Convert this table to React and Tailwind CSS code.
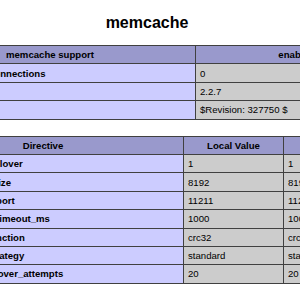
import React from 'react';

const info = [
  ['Active persistent connections', '0'],
  ['Version', '2.2.7'],
  ['Revision', '$Revision: 327750 $'],
];

const directives = [
  ['memcache.allow_failover', '1', '1'],
  ['memcache.chunk_size', '8192', '8192'],
  ['memcache.default_port', '11211', '11211'],
  ['memcache.default_timeout_ms', '1000', '1000'],
  ['memcache.hash_function', 'crc32', 'crc32'],
  ['memcache.hash_strategy', 'standard', 'standard'],
  ['memcache.max_failover_attempts', '20', '20'],
];

const cell = 'border border-[#404040] h-[18.4px] p-0 leading-[11px] align-middle whitespace-nowrap overflow-hidden';

const App = () => {
  return (
    <div className="w-[300px] h-[300px] overflow-hidden bg-white text-black font-['Liberation_Sans',Arial,sans-serif]">
      <h2 className="pt-[12px] pr-[6px] text-center text-[16px] leading-[21px] font-bold">memcache</h2>

      <table className="mt-[12px] ml-[-96px] w-[493px] table-fixed border-collapse text-[9.6px]">
        <colgroup>
          <col className="w-[291px]" />
          <col className="w-[202px]" />
        </colgroup>
        <tbody>
          <tr className="bg-[#9999cc] font-bold">
            <th className={`${cell} text-center`}>memcache support</th>
            <th className={`${cell} text-center`}>enabled</th>
          </tr>
          {info.map(([name, value]) => (
            <tr key={name}>
              <td className={`${cell} bg-[#ccccff] font-bold pl-[4px] text-left`}>{name}</td>
              <td className={`${cell} bg-[#cccccc] pl-[4px] text-left`}>{value}</td>
            </tr>
          ))}
        </tbody>
      </table>

      <table className="mt-[16px] ml-[-98px] w-[501px] table-fixed border-collapse text-[9.6px]">
        <colgroup>
          <col className="w-[281px]" />
          <col className="w-[100px]" />
          <col className="w-[120px]" />
        </colgroup>
        <tbody>
          <tr className="bg-[#9999cc] font-bold">
            <th className={`${cell} text-center`}>Directive</th>
            <th className={`${cell} text-center`}>Local Value</th>
            <th className={`${cell} text-center`}>Master Value</th>
          </tr>
          {directives.map(([name, local, master]) => (
            <tr key={name}>
              <td className={`${cell} bg-[#ccccff] font-bold pl-[4px] text-left`}>{name}</td>
              <td className={`${cell} bg-[#cccccc] pl-[4px] text-left`}>{local}</td>
              <td className={`${cell} bg-[#cccccc] pl-[4px] text-left`}>{master}</td>
            </tr>
          ))}
        </tbody>
      </table>
    </div>
  );
};

export default App;
